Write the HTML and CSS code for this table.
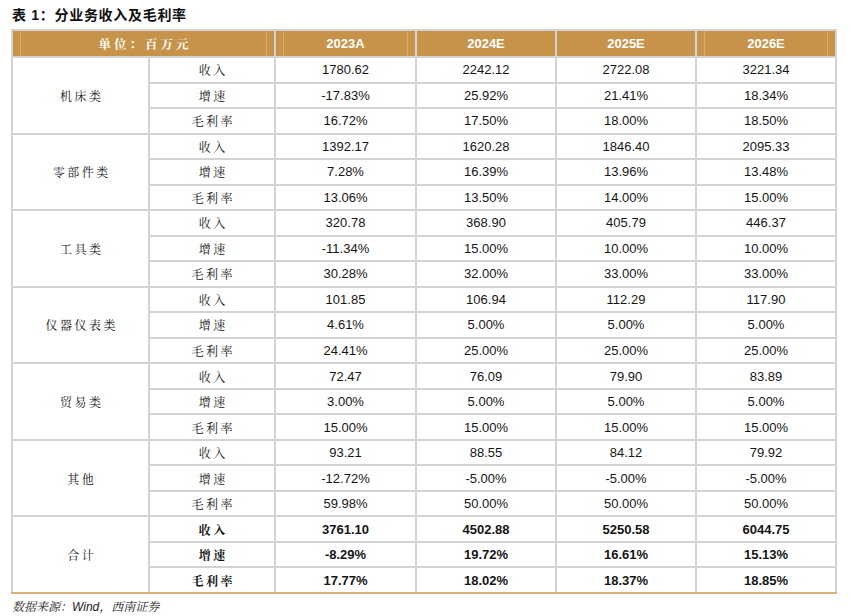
FILE: index.html
```html
<!DOCTYPE html>
<html lang="zh">
<head>
<meta charset="utf-8">
<title>表 1：分业务收入及毛利率</title>
<link rel="stylesheet" href="styles.css">
</head>
<body>
<div class="page">
  <h1 class="title">表 1：分业务收入及毛利率</h1>
  <div class="table">
    <div class="hd unit line-l line-r">单位：百万元</div>
    <div class="hd year line-l line-r">2023A</div>
    <div class="hd year line-l">2024E</div>
    <div class="hd year line-r">2025E</div>
    <div class="hd year line-l line-r">2026E</div>

    <div class="cat">机床类</div>
    <div class="met">收入</div><div class="num">1780.62</div><div class="num">2242.12</div><div class="num">2722.08</div><div class="num">3221.34</div>
    <div class="met">增速</div><div class="num">-17.83%</div><div class="num">25.92%</div><div class="num">21.41%</div><div class="num">18.34%</div>
    <div class="met">毛利率</div><div class="num">16.72%</div><div class="num">17.50%</div><div class="num">18.00%</div><div class="num">18.50%</div>

    <div class="cat">零部件类</div>
    <div class="met">收入</div><div class="num">1392.17</div><div class="num">1620.28</div><div class="num">1846.40</div><div class="num">2095.33</div>
    <div class="met">增速</div><div class="num">7.28%</div><div class="num">16.39%</div><div class="num">13.96%</div><div class="num">13.48%</div>
    <div class="met">毛利率</div><div class="num">13.06%</div><div class="num">13.50%</div><div class="num">14.00%</div><div class="num">15.00%</div>

    <div class="cat">工具类</div>
    <div class="met">收入</div><div class="num">320.78</div><div class="num">368.90</div><div class="num">405.79</div><div class="num">446.37</div>
    <div class="met">增速</div><div class="num">-11.34%</div><div class="num">15.00%</div><div class="num">10.00%</div><div class="num">10.00%</div>
    <div class="met">毛利率</div><div class="num">30.28%</div><div class="num">32.00%</div><div class="num">33.00%</div><div class="num">33.00%</div>

    <div class="cat">仪器仪表类</div>
    <div class="met">收入</div><div class="num">101.85</div><div class="num">106.94</div><div class="num">112.29</div><div class="num">117.90</div>
    <div class="met">增速</div><div class="num">4.61%</div><div class="num">5.00%</div><div class="num">5.00%</div><div class="num">5.00%</div>
    <div class="met">毛利率</div><div class="num">24.41%</div><div class="num">25.00%</div><div class="num">25.00%</div><div class="num">25.00%</div>

    <div class="cat">贸易类</div>
    <div class="met">收入</div><div class="num">72.47</div><div class="num">76.09</div><div class="num">79.90</div><div class="num">83.89</div>
    <div class="met">增速</div><div class="num">3.00%</div><div class="num">5.00%</div><div class="num">5.00%</div><div class="num">5.00%</div>
    <div class="met">毛利率</div><div class="num">15.00%</div><div class="num">15.00%</div><div class="num">15.00%</div><div class="num">15.00%</div>

    <div class="cat">其他</div>
    <div class="met">收入</div><div class="num">93.21</div><div class="num">88.55</div><div class="num">84.12</div><div class="num">79.92</div>
    <div class="met">增速</div><div class="num">-12.72%</div><div class="num">-5.00%</div><div class="num">-5.00%</div><div class="num">-5.00%</div>
    <div class="met">毛利率</div><div class="num">59.98%</div><div class="num">50.00%</div><div class="num">50.00%</div><div class="num">50.00%</div>

    <div class="cat">合计</div>
    <div class="met b">收入</div><div class="num b">3761.10</div><div class="num b">4502.88</div><div class="num b">5250.58</div><div class="num b">6044.75</div>
    <div class="met b">增速</div><div class="num b">-8.29%</div><div class="num b">19.72%</div><div class="num b">16.61%</div><div class="num b">15.13%</div>
    <div class="met b">毛利率</div><div class="num b">17.77%</div><div class="num b">18.02%</div><div class="num b">18.37%</div><div class="num b">18.85%</div>
  </div>
  <p class="source">数据来源：Wind，西南证券</p>
</div>
</body>
</html>
```

FILE: styles.css
```css
* { box-sizing: border-box; }
html, body { margin: 0; padding: 0; background: #ffffff; }

.page {
  width: 851px;
  height: 616px;
  padding-left: 11px;
  overflow: hidden;
}

.title {
  margin: 0;
  padding-top: 2px;
  height: 29px;
  line-height: 27px;
  font-family: "Liberation Sans", "Noto Sans CJK SC", sans-serif;
  font-size: 14px;
  font-weight: 700;
  letter-spacing: 0.7px;
  color: #111111;
  padding-left: 1px;
}

.table {
  display: grid;
  width: 826px;
  grid-template-columns: 135px 124px 139px 138px 138px 138px;
  grid-template-rows: 25px repeat(21, 1fr);
  gap: 2px;
  padding: 2px 2px 0 2px;
  height: 565px;
  background: #d3d3d3;
  border-bottom: 2px solid #d9b27a;
}

.table > div {
  background: #ffffff;
  display: flex;
  align-items: center;
  justify-content: center;
  color: #151515;
  white-space: nowrap;
}

.hd {
  background-color: #c79249 !important;
  color: #ffffff !important;
}
.line-l { background-image: linear-gradient(to right, transparent 7px, #d9ad71 7px, #d9ad71 8px, transparent 8px); }
.line-r { background-image: linear-gradient(to left, transparent 7px, #d9ad71 7px, #d9ad71 8px, transparent 8px); }
.line-l.line-r {
  background-image:
    linear-gradient(to right, transparent 7px, #d9ad71 7px, #d9ad71 8px, transparent 8px),
    linear-gradient(to left, transparent 7px, #d9ad71 7px, #d9ad71 8px, transparent 8px);
}

.unit {
  grid-column: span 2;
  font-family: "Noto Serif CJK SC", "Noto Sans CJK SC", serif;
  font-size: 12.5px;
  font-weight: 700;
  letter-spacing: 3px;
  padding-left: 3px;
}

.year {
  font-family: "Liberation Sans", Arial, sans-serif;
  font-size: 13px;
  font-weight: 700;
}

.cat {
  grid-row: span 3;
  font-family: "Noto Serif CJK SC", "Noto Sans CJK SC", serif;
  font-size: 12px;
  letter-spacing: 2.5px;
  padding-left: 2.5px;
}

.met {
  font-family: "Noto Serif CJK SC", "Noto Sans CJK SC", serif;
  font-size: 12px;
  letter-spacing: 2.5px;
  padding-left: 2.5px;
}

.num {
  font-family: "Liberation Sans", Arial, sans-serif;
  font-size: 13px;
}

.b { font-weight: 700; }

.source {
  margin: 0;
  padding-top: 3px;
  padding-left: 1px;
  line-height: 20px;
  font-family: "Liberation Sans", "Noto Serif CJK SC", "Noto Sans CJK SC", sans-serif;
  font-size: 12px;
  font-style: italic;
  color: #222222;
}
```
